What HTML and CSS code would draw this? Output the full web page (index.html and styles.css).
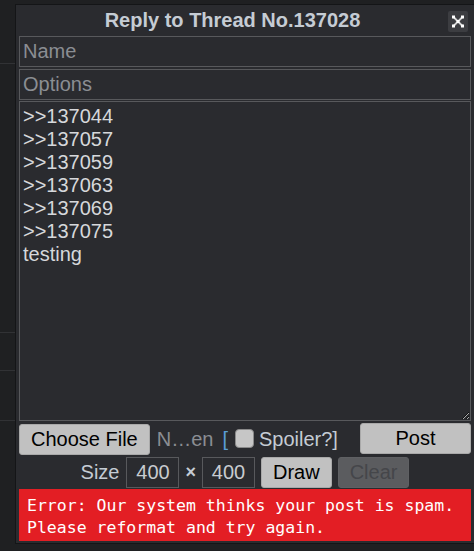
FILE: index.html
```html
<!DOCTYPE html>
<html lang="en">
<head>
<meta charset="utf-8">
<title>Reply to Thread No.137028</title>
<link rel="stylesheet" href="styles.css">
</head>
<body>
<div class="page">
  <div class="bg-row r1"></div>
  <div class="bg-row r2"></div>
  <div class="bg-row r3"></div>
  <div class="bg-row r4"></div>
</div>
<form class="dialog">
  <div class="title-row">
    <div class="title">Reply to Thread No.137028</div>
    <button type="button" class="close" aria-label="Close">
      <svg width="20" height="21" viewBox="0 0 20 21">
        <rect x="0" y="0" width="20" height="21" rx="2" fill="#3c3d41"/>
        <path d="M5.5 6 L14.5 15 M14.5 6 L5.5 15" stroke="#d4d4d4" stroke-width="1.8"/>
        <rect x="4" y="4.5" width="3" height="3" fill="#fff"/>
        <rect x="13" y="4.5" width="3" height="3" fill="#fff"/>
        <rect x="4" y="13.5" width="3" height="3" fill="#fff"/>
        <rect x="13" y="13.5" width="3" height="3" fill="#fff"/>
        <rect x="8.5" y="9" width="3" height="3" fill="#fff"/>
      </svg>
    </button>
  </div>
  <input class="field" type="text" placeholder="Name">
  <input class="field options" type="text" placeholder="Options">
  <textarea class="body-text">&gt;&gt;137044
&gt;&gt;137057
&gt;&gt;137059
&gt;&gt;137063
&gt;&gt;137069
&gt;&gt;137075
testing</textarea>
  <div class="file-row">
    <button type="button" class="btn choose">Choose File</button>
    <span class="file-name">N…en</span>
    <span class="bracket">[</span>
    <label class="spoiler"><input type="checkbox" class="check"><span>Spoiler?]</span></label>
    <button type="button" class="btn post">Post</button>
  </div>
  <div class="size-row">
    <span class="size-label">Size</span>
    <input class="size-input" type="text" value="400">
    <span class="times">×</span>
    <input class="size-input" type="text" value="400">
    <button type="button" class="btn">Draw</button>
    <button type="button" class="btn" disabled>Clear</button>
  </div>
  <div class="error">Error: Our system thinks your post is spam.<br>Please reformat and try again.</div>
</form>
</body>
</html>
```

FILE: styles.css
```css
html, body {
  margin: 0;
  padding: 0;
}

body {
  background: #1f2022;
  font-family: "Liberation Sans", Arial, sans-serif;
  width: 474px;
  height: 551px;
  overflow: hidden;
  position: relative;
}

.page {
  display: flex;
  flex-direction: column;
}

.bg-row {
  border-bottom: 1px solid #313235;
}

.r1 { height: 63px; }
.r2 { height: 268px; }
.r3 { height: 37px; }
.r4 { height: 49px; }

.dialog {
  position: absolute;
  left: 15px;
  top: 4px;
  width: 452px;
  margin: 0;
  padding: 0 3px 2px;
  background: #2a2b2f;
  border: 1px solid #141517;
  display: flex;
  flex-direction: column;
}

.title-row {
  display: flex;
  align-items: flex-start;
  height: 29px;
  margin-bottom: 2px;
}

.title {
  flex: 1;
  text-align: center;
  font-weight: bold;
  font-size: 20px;
  line-height: 23px;
  padding-top: 4px;
  color: #c5ccd4;
}

.close {
  width: 20px;
  height: 21px;
  padding: 0;
  margin: 6px 3px 0 2px;
  border: 0;
  background: none;
  display: block;
}

.close svg {
  display: block;
}

.field {
  box-sizing: border-box;
  width: 100%;
  height: 31px;
  margin: 0;
  padding: 0 3px;
  border: 1px solid #58595c;
  background: #2a2b2f;
  color: #d4d7da;
  font-family: "Liberation Sans", Arial, sans-serif;
  font-size: 20px;
  outline: none;
}

.field::placeholder {
  color: #8b8e93;
}

.options {
  margin-top: 2px;
}

.body-text {
  display: block;
  box-sizing: border-box;
  width: 100%;
  height: 320px;
  margin: 1px 0 0;
  padding: 3px 3px;
  border: 1px solid #58595c;
  background: #2a2b2f;
  color: #d6d8db;
  font-family: "Liberation Sans", Arial, sans-serif;
  font-size: 20px;
  line-height: 23px;
  resize: both;
  color-scheme: dark;
  outline: none;
}

.file-row {
  display: flex;
  align-items: center;
  height: 32px;
  margin-top: 2px;
  font-size: 20px;
  line-height: 23px;
}

.btn {
  box-sizing: border-box;
  height: 31px;
  padding: 0 11px;
  margin: 0;
  border: 1px solid #a9a9a9;
  border-radius: 3px;
  background: #c1c1c1;
  color: #000;
  font-family: "Liberation Sans", Arial, sans-serif;
  font-size: 20px;
  line-height: 23px;
}

.btn:disabled {
  background: #5b5c5f;
  border-color: #5f6063;
  color: #45464a;
}

.choose {
  margin-top: 1px;
}

.file-name {
  margin-left: 7px;
  color: #8b8e93;
}

.bracket {
  margin-left: 9px;
  color: #5a9fd8;
}

.spoiler {
  display: flex;
  align-items: center;
  color: #c5ccd4;
}

.check {
  appearance: none;
  -webkit-appearance: none;
  box-sizing: border-box;
  width: 19px;
  height: 19px;
  margin: 0 5px 2px 7px;
  border: 1px solid #8a8a8a;
  border-radius: 4px;
  background: #c6c6c6;
}

.post {
  width: 111px;
  margin-left: auto;
  margin-top: -1px;
}

.size-row {
  display: flex;
  justify-content: center;
  align-items: center;
  gap: 6px;
  height: 31px;
  margin-top: 2px;
  font-size: 20px;
  line-height: 23px;
  color: #c5ccd4;
}

.size-label {
  margin-right: 1px;
}

.size-input {
  box-sizing: border-box;
  width: 53px;
  height: 31px;
  margin: 0;
  padding: 0;
  border: 1px solid #58595c;
  background: #2a2b2f;
  color: #c8ccd0;
  font-family: "Liberation Sans", Arial, sans-serif;
  font-size: 20px;
  text-align: center;
  outline: none;
}

.times {
  font-weight: bold;
  font-size: 18px;
}

.error {
  margin-top: 1px;
  padding: 6px 8px 2px;
  background: #e31e24;
  color: #fff;
  font-family: "DejaVu Sans Mono", "Liberation Mono", monospace;
  font-size: 16.5px;
  line-height: 22px;
}
```
